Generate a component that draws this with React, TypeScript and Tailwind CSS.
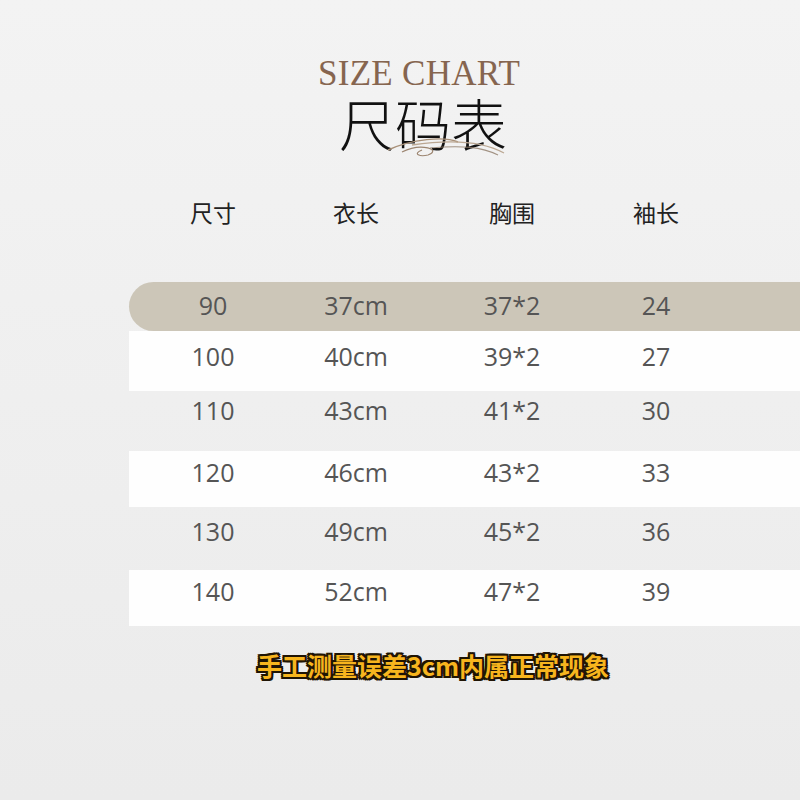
import React from 'react';

const rows = [
  { size: '90', len: '37cm', chest: '37*2', sleeve: '24', bg: 'bg-[#ccc6b8] rounded-l-full', h: 'h-[49px] pt-[8px]' },
  { size: '100', len: '40cm', chest: '39*2', sleeve: '27', bg: 'bg-[#fefefe]', h: 'h-[60px] pt-[10px]' },
  { size: '110', len: '43cm', chest: '41*2', sleeve: '30', bg: '', h: 'h-[60px] pt-[4px]' },
  { size: '120', len: '46cm', chest: '43*2', sleeve: '33', bg: 'bg-[#fefefe]', h: 'h-[56px] pt-[6px]' },
  { size: '130', len: '49cm', chest: '45*2', sleeve: '36', bg: '', h: 'h-[63px] pt-[9px]' },
  { size: '140', len: '52cm', chest: '47*2', sleeve: '39', bg: 'bg-[#fefefe]', h: 'h-[56px] pt-[6px]' },
];

const cols = 'grid grid-cols-[168px_118px_194px_94px]';

export default function App() {
  return (
    <div className="w-[800px] h-[800px] overflow-hidden bg-gradient-to-b from-[#f3f3f3] to-[#ebebeb] pt-[56px]">
      {/* Title */}
      <div className="flex flex-col items-center pl-[38px]">
        <div className="h-[33px] text-[35px] leading-none tracking-[0.3px] text-[#86654f] font-['Liberation_Serif',serif]">
          SIZE CHART
        </div>
        <div className="relative mt-[5px] pl-[8px]">
          <div className="text-[56px] leading-none font-extralight text-[#111] font-['Noto_Sans_CJK_SC',sans-serif]">
            尺码表
          </div>
          <svg
            className="absolute left-[55px] top-[36px]"
            width="130"
            height="28"
            viewBox="0 0 130 28"
            fill="none"
          >
            <path d="M2 20 C26 9 58 6 72 12" stroke="#a89078" strokeWidth="1.4" />
            <path d="M16 22 C36 12 56 20 42 25 C34 27 26 24 36 20" stroke="#9c8570" strokeWidth="1.2" />
            <path d="M26 15 C66 9 98 12 118 23" stroke="#bba792" strokeWidth="1.3" />
            <path d="M44 18 C76 15 96 17 112 25" stroke="#8f7b68" strokeWidth="1.1" opacity="0.8" />
          </svg>
        </div>
      </div>

      {/* Table */}
      <div className="mt-[47px] ml-[129px]">
        <div className={`${cols} h-[30px] text-[23px] leading-[30px] text-[#222] font-['Noto_Sans_CJK_SC',sans-serif]`}>
          <div className="text-center">尺寸</div>
          <div className="text-center">衣长</div>
          <div className="text-center">胸围</div>
          <div className="text-center">袖长</div>
        </div>

        <div className="mt-[55px] font-['Open_Sans',sans-serif] text-[25px] leading-[30px] text-[#555]">
          {rows.map((r) => (
            <div key={r.size} className={`${cols} ${r.bg} ${r.h}`}>
              <div className="text-center">{r.size}</div>
              <div className="text-center">{r.len}</div>
              <div className="text-center">{r.chest}</div>
              <div className="text-center">{r.sleeve}</div>
            </div>
          ))}
        </div>
      </div>

      {/* Note */}
      <div className="mt-[22px] flex justify-center pl-[66px]">
        <div className="text-[25px] leading-[34px] font-bold text-[#f7b51e] font-['Noto_Sans_CJK_SC',sans-serif] [text-shadow:-2px_-2px_0_#1f1404,2px_-2px_0_#1f1404,-2px_2px_0_#1f1404,2px_2px_0_#1f1404,0_2px_0_#1f1404,0_-2px_0_#1f1404,2px_0_0_#1f1404,-2px_0_0_#1f1404]">
          手工测量误差3cm内属正常现象
        </div>
      </div>
    </div>
  );
}
